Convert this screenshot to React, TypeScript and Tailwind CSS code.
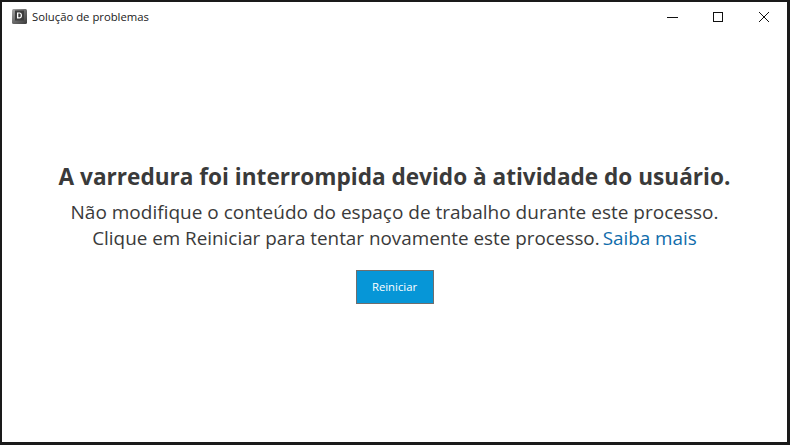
function Ctl({ children }: { children: React.ReactNode }) {
  return (
    <div className="w-[46px] h-[30px] flex items-center justify-center">
      <svg width="12" height="12" viewBox="0 0 12 12" fill="none" stroke="#111" strokeWidth="1" shapeRendering="crispEdges">
        {children}
      </svg>
    </div>
  );
}

export default function App() {
  return (
    <div className="w-[790px] h-[445px] bg-white border-t-2 border-l-2 border-r-[3px] border-b-[3px] border-[#1a1a1a] flex flex-col overflow-hidden" style={{ fontFamily: '"Open Sans", sans-serif' }}>
      <div className="h-[30px] flex items-center shrink-0">
        <svg width="16" height="16" viewBox="0 0 16 16" className="ml-[10px] mr-[4px]">
          <defs>
            <linearGradient id="g" x1="0" y1="0" x2="1" y2="1">
              <stop offset="0" stopColor="#a8a8a8" />
              <stop offset="0.5" stopColor="#6a6a6a" />
              <stop offset="1" stopColor="#3a3a3a" />
            </linearGradient>
          </defs>
          <rect x="0" y="0" width="15" height="15" rx="1.5" fill="url(#g)" />
          <rect x="3" y="1.5" width="9" height="10" fill="#3d3d3d" />
          <path d="M5 3.5h2.4c1.6 0 2.6 1 2.6 2.9s-1 3-2.6 3H5z M6.3 4.6v3.7h1c.9 0 1.4-.7 1.4-1.9s-.5-1.8-1.4-1.8z" fill="#fff" fillRule="evenodd" />
        </svg>
        <span className="text-[11.3px] text-[#1a1a1a]">Solução de problemas</span>
        <div className="ml-auto flex">
          <Ctl><path d="M1 6.5h11" /></Ctl>
          <Ctl><rect x="1.5" y="1.5" width="9" height="9" /></Ctl>
          <div className="w-[46px] h-[30px] flex items-center justify-center">
            <svg width="12" height="12" viewBox="0 0 12 12" fill="none" stroke="#111" strokeWidth="1">
              <path d="M1 1l10 10M11 1L1 11" />
            </svg>
          </div>
        </div>
      </div>
      <div className="flex-1 flex flex-col items-center text-[#3a3a3a]">
        <div className="mt-[127px] text-[22.6px] font-bold leading-[36px]">A varredura foi interrompida devido à atividade do usuário.</div>
        <div className="text-[19px] leading-[26px] mt-[4px]">Não modifique o conteúdo do espaço de trabalho durante este processo.</div>
        <div className="text-[18.85px] leading-[26px] flex gap-[3px]">
          <span>Clique em Reiniciar para tentar novamente este processo.</span>
          <span className="text-[#0f6cab]">Saiba mais</span>
        </div>
        <button className="mt-[19px] w-[78px] h-[34px] bg-[#0696d7] border border-[#6e6e6e] text-white text-[11.3px]">Reiniciar</button>
      </div>
    </div>
  );
}
